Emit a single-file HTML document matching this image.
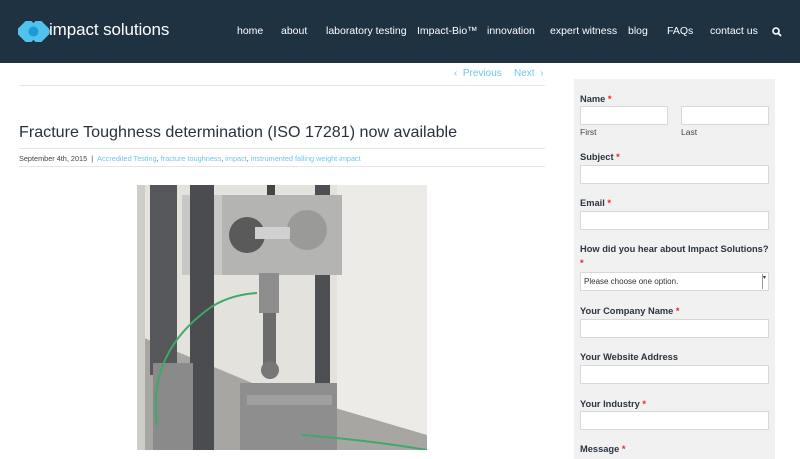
<!DOCTYPE html>
<html><head><meta charset="utf-8"><style>
*{margin:0;padding:0;box-sizing:border-box}
body{width:800px;height:450px;overflow:hidden;background:#fff;font-family:"Liberation Sans",sans-serif;position:relative}
.hdr{position:absolute;left:0;top:0;width:800px;height:63px;background:#1f3242}
.logo{position:absolute;left:49px;top:20px;color:#fff;font-size:17px;letter-spacing:-0.1px}
.nav span{position:absolute;top:25px;color:#fff;font-size:10.5px}
.a{position:absolute;font-size:10px;color:#6fc6ee}
.line{position:absolute;left:19px;width:526px;height:1px;background:#e6e6e6}
h1{position:absolute;left:19px;top:123px;font-weight:normal;font-size:16.1px;color:#27323d;white-space:nowrap}
.meta{position:absolute;left:19px;top:154px;font-size:7.3px;color:#444;white-space:nowrap}
.meta b{font-weight:normal;color:#6fc6ee}
.side{position:absolute;left:574px;top:79px;width:201px;height:380px;background:#f1f1f1}
.lab{position:absolute;left:580px;font-size:9.3px;font-weight:bold;color:#2c3440}
.lab i{color:#e22;font-style:normal}
.in{position:absolute;background:#fff;border:1px solid #d8d8d8;height:19px}
.sm{position:absolute;font-size:8.5px;color:#444}
</style></head><body>
<div class="hdr"></div>
<svg style="position:absolute;left:18px;top:21px" width="32" height="21" viewBox="0 0 32 21">
<rect x="1" y="1" width="19" height="19" rx="5" transform="rotate(45 10.5 10.5)" fill="#4fc3ee"/>
<rect x="11" y="1" width="19" height="19" rx="5" transform="rotate(45 20.5 10.5)" fill="#4fc3ee"/>
<circle cx="15.5" cy="10.5" r="5" fill="#1f9ad6"/></svg>
<div class="logo">impact solutions</div>
<div class="nav">
<span style="left:237px">home</span><span style="left:281px">about</span><span style="left:326px">laboratory testing</span><span style="left:417px">Impact-Bio™</span><span style="left:487px">innovation</span><span style="left:550px">expert witness</span><span style="left:628px">blog</span><span style="left:667px">FAQs</span><span style="left:710px">contact us</span>
</div>
<svg style="position:absolute;left:772px;top:27px" width="10" height="10" viewBox="0 0 10 10"><circle cx="4" cy="4" r="3" stroke="#fff" stroke-width="1.6" fill="none"/><path d="M6.3 6.3L9 9" stroke="#fff" stroke-width="1.8"/></svg>
<div class="line" style="top:85px"></div>
<div class="a" style="left:454px;top:68px">‹ &nbsp;Previous</div>
<div class="a" style="left:514px;top:68px">Next &nbsp;›</div>
<h1>Fracture Toughness determination (ISO 17281) now available</h1>
<div class="line" style="top:148px"></div>
<div class="meta">September 4th, 2015 &nbsp;| &nbsp;<b>Accredited Testing</b>, <b>fracture toughness</b>, <b>impact</b>, <b>instrumented falling weight impact</b></div>
<div class="line" style="top:166px"></div>
<svg style="position:absolute;left:137px;top:185px" width="290" height="265" viewBox="0 0 290 265">
<rect width="290" height="265" fill="#e4e2dd"/>
<rect x="200" y="0" width="90" height="265" fill="#ecebe7"/>
<polygon points="0,150 120,200 290,250 290,265 0,265" fill="#a8a6a2"/>
<rect x="0" y="0" width="8" height="265" fill="#cfcdc8"/>
<rect x="13" y="0" width="27" height="190" fill="#55575a"/>
<rect x="130" y="0" width="8" height="20" fill="#444"/>
<rect x="178" y="0" width="15" height="210" fill="#4d4f52"/>
<rect x="45" y="10" width="160" height="80" fill="#b4b4b2"/>
<rect x="45" y="10" width="40" height="80" fill="#c8c8c6"/>
<circle cx="110" cy="50" r="18" fill="#5a5a5a"/><circle cx="170" cy="45" r="20" fill="#9a9a98"/>
<rect x="118" y="42" width="35" height="12" fill="#d0d0d0"/>
<rect x="122" y="88" width="20" height="40" fill="#8d8d8d"/>
<rect x="126" y="128" width="13" height="55" fill="#6c6c6c"/>
<circle cx="133" cy="185" r="9" fill="#777"/>
<rect x="53" y="0" width="24" height="265" fill="#4a4c4f"/>
<rect x="16" y="178" width="40" height="87" fill="#8a8a8a"/>
<rect x="103" y="198" width="97" height="67" fill="#8e8e8e"/>
<rect x="110" y="210" width="85" height="10" fill="#a0a0a0"/>
<path d="M20 240 Q10 170 70 125 Q90 110 120 108" stroke="#3fa86a" stroke-width="2" fill="none"/>
<path d="M165 250 Q230 255 290 265" stroke="#3fa86a" stroke-width="2" fill="none"/>
</svg>
<div class="side"></div>
<div class="lab" style="top:94px">Name <i>*</i></div>
<div class="in" style="left:580px;top:106px;width:88px"></div>
<div class="in" style="left:681px;top:106px;width:88px"></div>
<div class="sm" style="left:580px;top:127px">First</div>
<div class="sm" style="left:681px;top:127px">Last</div>
<div class="lab" style="top:152px">Subject <i>*</i></div>
<div class="in" style="left:580px;top:165px;width:189px"></div>
<div class="lab" style="top:198px">Email <i>*</i></div>
<div class="in" style="left:580px;top:211px;width:189px"></div>
<div class="lab" style="top:244px">How did you hear about Impact Solutions?</div>
<div class="lab" style="top:258px"><i>*</i></div>
<div class="in" style="left:580px;top:272px;width:189px;font-size:8px;color:#333;padding:4px 3px">Please choose one option.<span style="position:absolute;right:1px;top:1px;width:5px;height:15px;border-left:1px solid #999;font-size:6px">▾</span></div>
<div class="lab" style="top:306px">Your Company Name <i>*</i></div>
<div class="in" style="left:580px;top:319px;width:189px"></div>
<div class="lab" style="top:352px">Your Website Address</div>
<div class="in" style="left:580px;top:365px;width:189px"></div>
<div class="lab" style="top:399px">Your Industry <i>*</i></div>
<div class="in" style="left:580px;top:411px;width:189px"></div>
<div class="lab" style="top:444px">Message <i>*</i></div>
</body></html>
